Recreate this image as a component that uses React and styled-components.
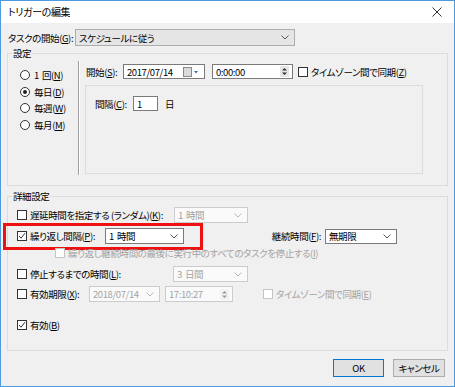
import React from "react";
import styled, { createGlobalStyle } from "styled-components";

const GlobalStyle = createGlobalStyle`
  html, body { margin: 0; padding: 0; background: #fff; }
  body {
    font-family: "Noto Sans CJK JP", "Noto Sans", sans-serif;
    font-size: 9.5px;
    letter-spacing: -0.4px;
    color: #000;
  }
  * {
    box-sizing: border-box;
    font-feature-settings: "palt" 1;
  }
`;

const Window = styled.div`
  width: 455px;
  height: 387px;
  border: 1px solid #4e9ae0;
  display: flex;
  flex-direction: column;
  background: #f0f0f0;
`;

const TitleBar = styled.div`
  height: 22px;
  flex: none;
  background: #fff;
  display: flex;
  align-items: center;
  justify-content: space-between;
  padding: 0 12px 0 7px;
  line-height: 12px;
  font-size: 10px;
`;

const Body = styled.div`
  flex: 1;
  display: flex;
  flex-direction: column;
  padding: 0 6px;
`;

const Row = styled.div`
  display: flex;
  align-items: center;
  height: ${({ h }) => h || 16}px;
  margin-top: ${({ mt }) => mt || 0}px;
  padding-left: ${({ pl }) => pl || 0}px;
  position: relative;
  white-space: nowrap;
  line-height: 12px;
`;

const Label = styled.span`
  flex: none;
  min-width: ${({ w }) => (w ? `${w}px` : "0")};
  margin-left: ${({ ml }) => ml || 0}px;
  text-align: ${({ right }) => (right ? "right" : "left")};
  padding-right: ${({ right }) => (right ? 4 : 0)}px;
  color: ${({ disabled }) => (disabled ? "#a3a3a3" : "#000")};
`;

const Gap = styled.span`
  display: inline-block;
  width: 3px;
`;

const Group = styled.fieldset`
  margin: ${({ mt }) => mt}px 0 0;
  padding: 0;
  border: 1px solid #dcdcdc;
  height: ${({ h }) => h}px;
  min-width: 0;
`;

const Legend = styled.legend`
  margin-left: 4px;
  padding: 0 1px;
  line-height: 12px;
`;

const SettingsInner = styled.div`
  display: flex;
  height: 126px;
`;

const RadioColumn = styled.div`
  width: 71px;
  margin: 2px 0 10px;
  padding: 6px 0 0 12px;
  border-right: 1px solid #a0a0a0;
  box-shadow: 1px 0 0 #fff;
`;

const RightPane = styled.div`
  flex: 1;
  padding: 5px 0 0 6px;
`;

const IntervalBox = styled.div`
  margin-top: 6px;
  width: 338px;
  height: 89px;
  border: 1px solid #dcdcdc;
  padding: 10px 0 0 9px;
`;

const RadioCircle = styled.span`
  flex: none;
  width: 10px;
  height: 10px;
  border-radius: 50%;
  border: 1px solid #333;
  background: #fff;
  display: flex;
  align-items: center;
  justify-content: center;
  margin-right: 4px;
  &::after {
    content: "";
    width: 4px;
    height: 4px;
    border-radius: 50%;
    background: ${({ checked }) => (checked ? "#222" : "transparent")};
  }
`;

const Box = styled.span`
  flex: none;
  width: 10px;
  height: 10px;
  border: 1px solid ${({ disabled }) => (disabled ? "#c4c4c4" : "#333")};
  background: #fff;
  display: flex;
  align-items: center;
  justify-content: center;
  margin-right: 3px;
  margin-left: ${({ ml }) => ml || 0}px;
`;

const Field = styled.div`
  flex: none;
  display: flex;
  align-items: center;
  justify-content: space-between;
  width: ${({ w }) => w}px;
  height: ${({ h }) => h || 16}px;
  margin-left: ${({ ml }) => ml || 0}px;
  border: 1px solid ${({ disabled, flat }) => (disabled ? "#cccccc" : flat ? "#adadad" : "#7a7a7a")};
  background: ${({ flat, disabled }) => (flat ? "#e5e5e5" : disabled ? "#fafafa" : "#fff")};
  color: ${({ disabled }) => (disabled ? "#a3a3a3" : "#000")};
  font-size: 9.5px;
  padding-left: 3px;
  line-height: 12px;
`;

const Chev = styled.svg`
  flex: none;
  margin-right: 5px;
`;

const Spinner = styled.span`
  flex: none;
  width: 9px;
  height: 11px;
  margin-right: 3px;
  background: ${({ disabled }) => (disabled ? "#f2f2f2" : "#e6e6e6")};
  display: flex;
  align-items: center;
  justify-content: center;
`;

const Highlight = styled.div`
  position: absolute;
  left: -5px;
  top: -5px;
  width: 200px;
  height: 27px;
  border: 3px solid #ee1111;
  pointer-events: none;
`;

const ButtonRow = styled.div`
  display: flex;
  justify-content: flex-end;
  gap: 9px;
  margin-top: 8px;
  padding-right: 3px;
`;

const Button = styled.div`
  width: ${({ w }) => w}px;
  height: 18px;
  display: flex;
  align-items: center;
  justify-content: center;
  background: #e1e1e1;
  border: 1px solid ${({ primary }) => (primary ? "#0078d7" : "#adadad")};
  line-height: 12px;
`;

const Chevron = ({ color = "#555" }) => (
  <Chev width="8" height="5" viewBox="0 0 8 5">
    <path d="M0.5 0.5 L4 4 L7.5 0.5" fill="none" stroke={color} strokeWidth="1" />
  </Chev>
);

const Check = () => (
  <svg width="8" height="8" viewBox="0 0 8 8">
    <path d="M1 4 L3 6.2 L7 1.2" fill="none" stroke="#333" strokeWidth="1" />
  </svg>
);

const Checkbox = ({ checked, disabled, ml }) => (
  <Box disabled={disabled} ml={ml}>
    {checked && <Check />}
  </Box>
);

const Radio = ({ checked, children }) => (
  <Row h={16.5}>
    <RadioCircle checked={checked} />
    <span>{children}</span>
  </Row>
);

const SpinArrows = ({ color = "#333", disabled }) => (
  <Spinner disabled={disabled}>
    <svg width="5" height="9" viewBox="0 0 5 9">
      <path d="M0 3.5 L2.5 1 L5 3.5 Z M0 5.5 L2.5 8 L5 5.5 Z" fill={color} />
    </svg>
  </Spinner>
);

const CalendarIcon = () => (
  <svg width="17" height="10" viewBox="0 0 17 10" style={{ marginRight: 4 }}>
    <rect x="0.5" y="0.5" width="8" height="9" fill="#dadada" stroke="#8a8a8a" />
    <path d="M11 4 L15 4 L13 6.5 Z" fill="#2e6fc2" />
  </svg>
);

export default function App() {
  return (
    <>
      <GlobalStyle />
      <Window>
        <TitleBar>
          <span>トリガーの編集</span>
          <svg width="10" height="10" viewBox="0 0 10 10">
            <path d="M0.5 0.5 L9.5 9.5 M9.5 0.5 L0.5 9.5" stroke="#333" strokeWidth="1" />
          </svg>
        </TitleBar>
        <Body>
          <Row h={17} mt={6}>
            <Label w={67} ml={1}>タスクの開始(<u>G</u>):</Label>
            <Field w={220} h={17} flat>
              <span>スケジュールに従う</span>
              <Chevron />
            </Field>
          </Row>

          <Group mt={1} h={139}>
            <Legend>設定</Legend>
            <SettingsInner>
              <RadioColumn>
                <Radio>1<Gap />回(<u>N</u>)</Radio>
                <Radio checked>毎日(<u>D</u>)</Radio>
                <Radio>毎週(<u>W</u>)</Radio>
                <Radio>毎月(<u>M</u>)</Radio>
              </RadioColumn>
              <RightPane>
                <Row h={15}>
                  <Label w={37} ml={1}>開始(<u>S</u>):</Label>
                  <Field w={82} h={15}>
                    <span>2017/07/14</span>
                    <CalendarIcon />
                  </Field>
                  <Field w={81} h={15} ml={7}>
                    <span>0:00:00</span>
                    <SpinArrows />
                  </Field>
                  <Checkbox ml={5} />
                  <span>タイムゾーン間で同期(<u>Z</u>)</span>
                </Row>
                <IntervalBox>
                  <Row h={15}>
                    <Label w={38}>間隔(<u>C</u>):</Label>
                    <Field w={25} h={15}>
                      <span>1</span>
                    </Field>
                    <Label ml={7}>日</Label>
                  </Row>
                </IntervalBox>
              </RightPane>
            </SettingsInner>
          </Group>

          <Group mt={4} h={161}>
            <Legend>詳細設定</Legend>
            <Row mt={5} pl={9}>
              <Checkbox />
              <Label w={144}>遅延時間を指定する (ランダム)(<u>K</u>):</Label>
              <Field w={74} disabled>
                <span>1<Gap />時間</span>
                <Chevron color="#b8b8b8" />
              </Field>
            </Row>
            <Row mt={5} pl={9}>
              <Highlight />
              <Checkbox checked />
              <Label w={75}>繰り返し間隔(<u>P</u>):</Label>
              <Field w={79}>
                <span>1<Gap />時間</span>
                <Chevron />
              </Field>
              <Label w={141} right>継続時間(<u>F</u>):</Label>
              <Field w={72} h={15}>
                <span>無期限</span>
                <Chevron />
              </Field>
            </Row>
            <Row mt={2} h={14} pl={47}>
              <Checkbox disabled />
              <Label disabled>繰り返し継続時間の最後に実行中のすべてのタスクを停止する(<u>I</u>)</Label>
            </Row>
            <Row mt={6} pl={9}>
              <Checkbox />
              <Label w={143}>停止するまでの時間(<u>L</u>):</Label>
              <Field w={75} disabled>
                <span>3<Gap />日間</span>
                <Chevron color="#b8b8b8" />
              </Field>
            </Row>
            <Row mt={4} pl={9}>
              <Checkbox />
              <Label w={59}>有効期限(<u>X</u>):</Label>
              <Field w={71} disabled>
                <span>2018/07/14</span>
                <Chevron color="#b8b8b8" />
              </Field>
              <Field w={68} ml={5} disabled>
                <span>17:10:27</span>
                <SpinArrows color="#9a9a9a" disabled />
              </Field>
              <Checkbox disabled ml={30} />
              <Label disabled>タイムゾーン間で同期(<u>E</u>)</Label>
            </Row>
            <Row mt={15} pl={9}>
              <Checkbox checked />
              <span>有効(<u>B</u>)</span>
            </Row>
          </Group>

          <ButtonRow>
            <Button w={51} primary>OK</Button>
            <Button w={52}>キャンセル</Button>
          </ButtonRow>
        </Body>
      </Window>
    </>
  );
}
